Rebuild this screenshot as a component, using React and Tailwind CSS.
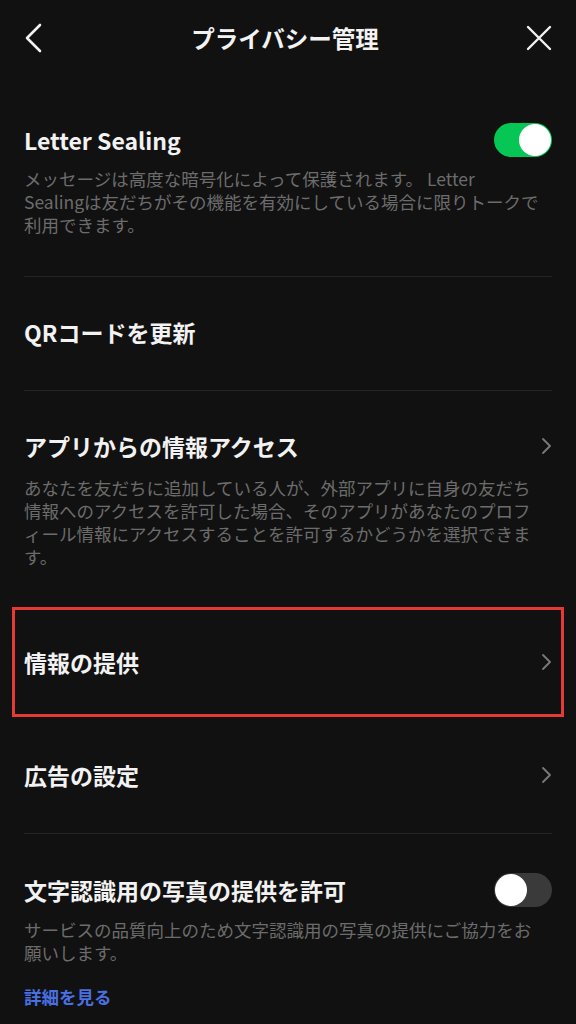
import React, { useState } from "react";

const FONT = { fontFamily: '"Noto Sans CJK JP", "Noto Sans", sans-serif' };

const Chevron = () => (
  <svg width="11" height="18" viewBox="0 0 11 18" fill="none" className="shrink-0">
    <path d="M2 2l7 7-7 7" stroke="#7a7a7a" strokeWidth="1.8" strokeLinecap="round" strokeLinejoin="round" />
  </svg>
);

const Toggle = ({ on, onClick }) => (
  <button
    type="button"
    onClick={onClick}
    className={`relative w-[58px] h-[34px] rounded-full shrink-0 ${on ? "bg-[#06c755]" : "bg-[#3a3a3a]"}`}
  >
    <span
      className={`absolute top-[1px] w-[32px] h-[32px] rounded-full bg-white ${on ? "right-[1px]" : "left-[1px]"}`}
    />
  </button>
);

const Divider = () => <div className="mx-6 h-px bg-[#242424]" />;

const Desc = ({ children, className = "" }) => (
  <p className={`text-[17.5px] leading-[23px] text-[#6c6c6c] whitespace-nowrap ${className}`}>{children}</p>
);

const Title = ({ children }) => (
  <span className="text-[23px] leading-[32px] font-bold text-[#f2f2f2]">{children}</span>
);

const App = () => {
  const [sealing, setSealing] = useState(true);
  const [ocr, setOcr] = useState(false);

  return (
    <div className="min-h-screen w-[576px] bg-[#111111] overflow-hidden" style={FONT}>
      {/* Header */}
      <div className="h-[76px] flex items-center justify-between px-[24px]">
        <svg width="20" height="30" viewBox="0 0 20 30" fill="none">
          <path d="M16 2L3 15l13 13" stroke="#f2f2f2" strokeWidth="2.6" strokeLinecap="round" strokeLinejoin="round" />
        </svg>
        <h1 className="text-[23.5px] font-bold text-[#f2f2f2] leading-[32px]">プライバシー管理</h1>
        <svg width="26" height="26" viewBox="0 0 26 26" fill="none">
          <path d="M2 2l22 22M24 2L2 24" stroke="#f2f2f2" strokeWidth="2.4" strokeLinecap="round" />
        </svg>
      </div>

      {/* Letter Sealing */}
      <div className="px-6 pt-[47px] pb-[40px]">
        <div className="flex items-center justify-between">
          <Title>Letter Sealing</Title>
          <Toggle on={sealing} onClick={() => setSealing(!sealing)} />
        </div>
        <Desc className="mt-[10px]">
          メッセージは高度な暗号化によって保護されます。 Letter
          <br />
          Sealingは友だちがその機能を有効にしている場合に限りトークで
          <br />
          利用できます。
        </Desc>
      </div>
      <Divider />

      {/* QR */}
      <div className="h-[113px] px-6 flex items-center pb-[4px]">
        <Title>QRコードを更新</Title>
      </div>
      <Divider />

      {/* App access */}
      <div className="px-6 pt-[39px] pb-[39px]">
        <div className="flex items-center justify-between">
          <Title>アプリからの情報アクセス</Title>
          <Chevron />
        </div>
        <Desc className="mt-[14px]">
          あなたを友だちに追加している人が、外部アプリに自身の友だち
          <br />
          情報へのアクセスを許可した場合、そのアプリがあなたのプロフ
          <br />
          ィール情報にアクセスすることを許可するかどうかを選択できま
          <br />
          す。
        </Desc>
      </div>

      {/* Highlighted row */}
      <div className="mx-[12px] h-[110px] border-[3px] border-[#e53935] px-[9px] flex items-center justify-between">
        <Title>情報の提供</Title>
        <Chevron />
      </div>

      {/* Ads */}
      <div className="h-[116px] px-6 flex items-center justify-between">
        <Title>広告の設定</Title>
        <Chevron />
      </div>
      <Divider />

      {/* OCR */}
      <div className="px-6 pt-[39px] pb-6">
        <div className="flex items-center justify-between">
          <Title>文字認識用の写真の提供を許可</Title>
          <Toggle on={ocr} onClick={() => setOcr(!ocr)} />
        </div>
        <Desc className="mt-[11px]">
          サービスの品質向上のため文字認識用の写真の提供にご協力をお
          <br />
          願いします。
        </Desc>
        <a href="#" className="block mt-[21px] text-[17.5px] leading-[23px] font-bold text-[#4a6fe0]">
          詳細を見る
        </a>
      </div>
    </div>
  );
};

export default App;
